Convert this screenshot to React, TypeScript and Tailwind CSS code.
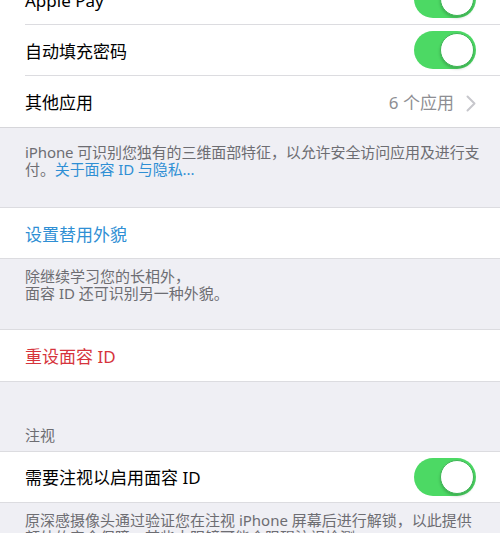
import React from "react";

const font = { fontFamily: '"Noto Sans", "Noto Sans CJK SC", sans-serif' };

function Toggle() {
    return (
        <div className="w-[62px] h-[38px] rounded-full bg-[#4cd964] relative shrink-0">
            <div className="absolute right-[2px] top-[2px] w-[34px] h-[34px] rounded-full bg-white border border-[#3fb556] shadow-[0_2px_3px_rgba(0,0,0,0.2)]" />
        </div>
    );
}

function Row({ children, right, last }: { children: React.ReactNode; right?: React.ReactNode; last?: boolean }) {
    return (
        <div className="pl-[25px]">
            <div className={`h-[51px] flex items-center justify-between pr-[24px] ${last ? "" : "border-b border-[#dcdce0]"}`}>
                <div className="text-[17px] text-black pt-[3px]">{children}</div>
                {right}
            </div>
        </div>
    );
}

export default function App() {
    return (
        <div className="w-[500px] h-[533px] overflow-hidden bg-[#efeff4]" style={font}>
            <div className="bg-white mt-[-26px] border-b border-[#d6d6da]">
                <Row right={<Toggle />}>Apple Pay</Row>
                <Row right={<Toggle />}>自动填充密码</Row>
                <Row
                    last
                    right={
                        <div className="flex items-center gap-[12px] text-[17px] text-[#8e8e93] pt-[3px]">
                            <span>6 个应用</span>
                            <svg width="10" height="17" viewBox="0 0 10 17" fill="none">
                                <path d="M1.5 1.5 L8.5 8.5 L1.5 15.5" stroke="#c7c7cc" strokeWidth="2" strokeLinecap="round" strokeLinejoin="round" />
                            </svg>
                        </div>
                    }
                >
                    其他应用
                </Row>
            </div>

            <div className="pl-[25px] pr-[16px] pt-[16px] h-[79px] text-[15px] leading-[17px] text-[#6d6d72] tracking-[-0.1px]">
                iPhone 可识别您独有的三维面部特征，以允许安全访问应用及进行支付。<span className="text-[#2f8fd4]">关于面容 ID 与隐私...</span>
            </div>

            <div className="bg-white border-y border-[#dcdce0] h-[52px] flex items-center px-[25px]">
                <span className="text-[17px] text-[#2f8fd4] pt-[3px]">设置替用外貌</span>
            </div>

            <div className="px-[25px] pt-[9px] h-[70px] text-[15px] leading-[17px] text-[#6d6d72]">
                除继续学习您的长相外，
                <br />
                面容 ID 还可识别另一种外貌。
            </div>

            <div className="bg-white border-y border-[#dcdce0] h-[53px] flex items-center px-[25px]">
                <span className="text-[17px] text-[#d6343c] pt-[3px]">重设面容 ID</span>
            </div>

            <div className="px-[25px] pt-[45px] h-[69px] text-[15px] leading-[17px] text-[#6d6d72]">注视</div>

            <div className="bg-white border-y border-[#dcdce0] h-[52px] flex items-center justify-between pl-[25px] pr-[24px]">
                <span className="text-[17px] text-black pt-[2px]">需要注视以启用面容 ID</span>
                <Toggle />
            </div>

            <div className="px-[25px] pt-[9px] text-[15px] leading-[17px] text-[#6d6d72]">
                原深感摄像头通过验证您在注视 iPhone 屏幕后进行解锁，以此提供额外的安全保障。某些太阳镜可能会阻碍注视检测。
            </div>
        </div>
    );
}
